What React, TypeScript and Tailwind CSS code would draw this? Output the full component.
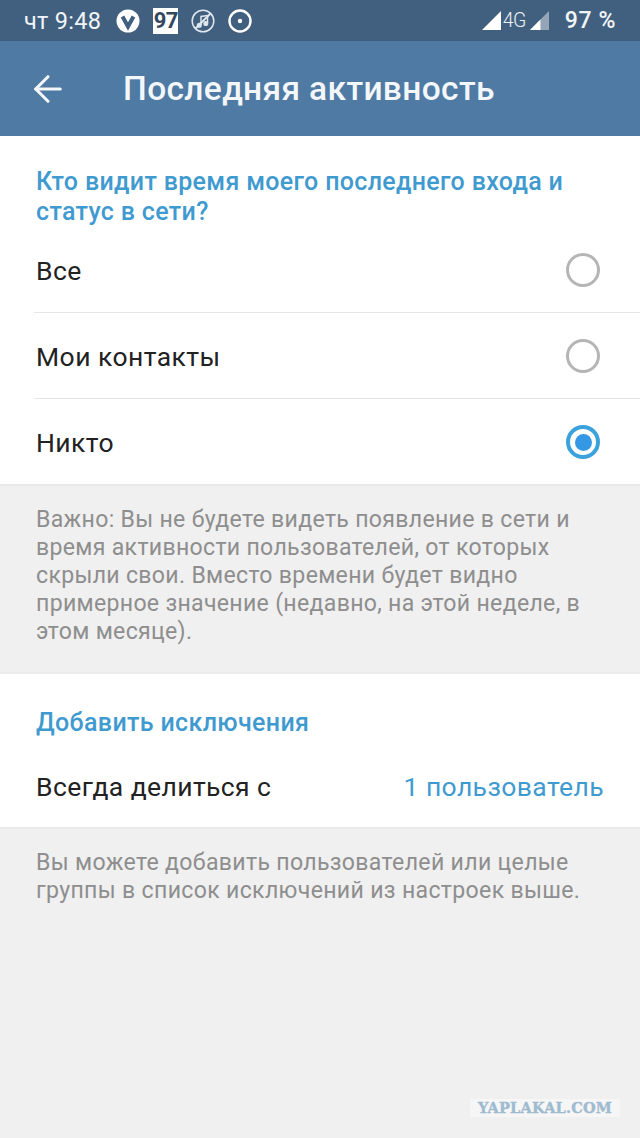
import { ArrowLeft } from "lucide-react";

const font = { fontFamily: "Roboto, sans-serif" };

function Radio({ checked }: { checked?: boolean }) {
  if (checked) {
    return (
      <span className="flex h-[34px] w-[34px] items-center justify-center rounded-full border-[4px] border-[#3ba2dc]">
        <span className="h-[17px] w-[17px] rounded-full bg-[#3498e4]" />
      </span>
    );
  }
  return <span className="h-[34px] w-[34px] rounded-full border-[3px] border-[#b5b5b5]" />;
}

function OptionRow({ label, checked, divider }: { label: string; checked?: boolean; divider?: boolean }) {
  return (
    <div className={`ml-[34px] flex h-[86px] items-center justify-between pr-[40px] ${divider ? "border-b border-[#e6e6e6]" : ""}`}>
      <span className="ml-[2px] translate-y-[1px] text-[26.5px] tracking-[0.45px] text-[#222222]">{label}</span>
      <Radio checked={checked} />
    </div>
  );
}

function StatusIcons() {
  return (
    <div className="ml-[15px] flex items-center gap-[13px]">
      {/* browser badge */}
      <svg width="24" height="24" viewBox="0 0 24 24">
        <circle cx="12" cy="12" r="11.5" fill="#ffffff" />
        <path d="M6.5 7.5 L12 17.5 L17.5 7.5" fill="none" stroke="#41607f" strokeWidth="4" />
      </svg>
      <span className="flex h-[26px] w-[25px] items-center justify-center bg-white text-[22px] font-bold leading-none tracking-[-0.5px] text-[#33485e]">
        97
      </span>
      {/* muted notes */}
      <svg width="24" height="24" viewBox="0 0 24 24" fill="none" stroke="#dfe6ed" strokeWidth="1.5">
        <circle cx="12" cy="12" r="10.8" />
        <path d="M10 16 V7.5 L16.5 6.5 V14" />
        <circle cx="8.3" cy="16.3" r="1.8" fill="#dfe6ed" />
        <circle cx="14.8" cy="14.5" r="1.8" fill="#dfe6ed" />
        <path d="M4.5 19.5 L19.5 4.5" strokeWidth="2" />
      </svg>
      <svg width="24" height="24" viewBox="0 0 24 24" fill="none" stroke="#ffffff" strokeWidth="2.4">
        <circle cx="12" cy="12" r="10.5" />
        <circle cx="12" cy="12" r="2.2" fill="#ffffff" stroke="none" />
      </svg>
    </div>
  );
}

function Signal({ size, partial }: { size: number; partial?: boolean }) {
  return (
    <svg width={size} height={size} viewBox="0 0 20 20">
      <path d="M20 0 V20 H0 Z" fill={partial ? "#94a5b8" : "#ffffff"} />
      {partial && <path d="M11 9 V20 H0 Z" fill="#ffffff" />}
    </svg>
  );
}

export default function App() {
  return (
    <div className="flex h-[1138px] w-[640px] flex-col overflow-hidden bg-[#f0f0f0]" style={font}>
      <div className="flex h-[41px] items-center bg-[#41607f] pl-[24px] pr-[24px] text-white">
        <span className="translate-y-[1px] text-[23.5px] leading-none tracking-[0.3px] text-[#f2f5f8]">чт 9:48</span>
        <StatusIcons />
        <div className="ml-auto flex items-center">
          <Signal size={19} />
          <span className="ml-[2px] text-[19.5px] font-light leading-none tracking-[-0.5px] text-[#eef2f5]">4G</span>
          <span className="ml-[4px]"><Signal size={19} partial /></span>
          <span className="ml-[16px] text-[23px] font-medium leading-none tracking-[0.6px] text-[#f2f5f8]">97 %</span>
        </div>
      </div>

      <div className="flex h-[95px] items-center bg-[#4e7aa3] pl-[27px] shadow-[0_1px_2px_rgba(0,0,0,0.18)]">
        <ArrowLeft size={42} strokeWidth={1.8} className="text-[#f4f7fa]" />
        <span className="ml-[54px] pt-[1px] text-[33.5px] font-medium tracking-[0.35px] text-[#f4f7fa]">Последняя активность</span>
      </div>

      <div className="h-[350px] border-b-2 border-[#e8e8e8] bg-white">
        <p className="pl-[36px] pr-[40px] pt-[31px] text-[25px] font-medium leading-[30px] tracking-[0.33px] text-[#3f9ad0]">
          Кто видит время моего последнего входа и статус в сети?
        </p>
        <div>
          <OptionRow label="Все" divider />
          <OptionRow label="Мои контакты" divider />
          <OptionRow label="Никто" checked />
        </div>
      </div>

      <p className="h-[186px] px-[36px] pt-[20px] text-[23.1px] leading-[28px] tracking-[0.3px] text-[#8e8e8e]">
        Важно: Вы не будете видеть появление в сети и время активности пользователей, от которых скрыли свои. Вместо времени будет видно примерное значение (недавно, на этой неделе, в этом месяце).
      </p>

      <div className="h-[157px] border-y-2 border-[#ebebeb] bg-white">
        <p className="pl-[36px] pt-[34px] text-[25px] font-medium leading-[30px] tracking-[0.35px] text-[#3f9ad0]">Добавить исключения</p>
        <div className="mt-[32px] flex items-center justify-between pl-[36px] pr-[36px]">
          <span className="text-[26.5px] leading-[34px] tracking-[0.4px] text-[#222222]">Всегда делиться с</span>
          <span className="text-[26.5px] leading-[34px] tracking-[0.4px] text-[#3f9ad0]">1 пользователь</span>
        </div>
      </div>

      <p className="px-[36px] pt-[20px] text-[23.1px] leading-[28px] tracking-[0.32px] text-[#8e8e8e]">
        Вы можете добавить пользователей или целые группы в список исключений из настроек выше.
      </p>

      <div className="mr-[20px] mt-auto mb-[21px] w-[150px] self-end bg-[#f6f6f6] py-[1px] text-center text-[14.5px] font-black leading-[16px] tracking-[0.2px] text-[#9fbbd0] [-webkit-text-stroke:0.4px_#9fbbd0]" style={{ fontFamily: "'DejaVu Serif', serif" }}>
        YAPLAKAL.COM
      </div>
    </div>
  );
}
